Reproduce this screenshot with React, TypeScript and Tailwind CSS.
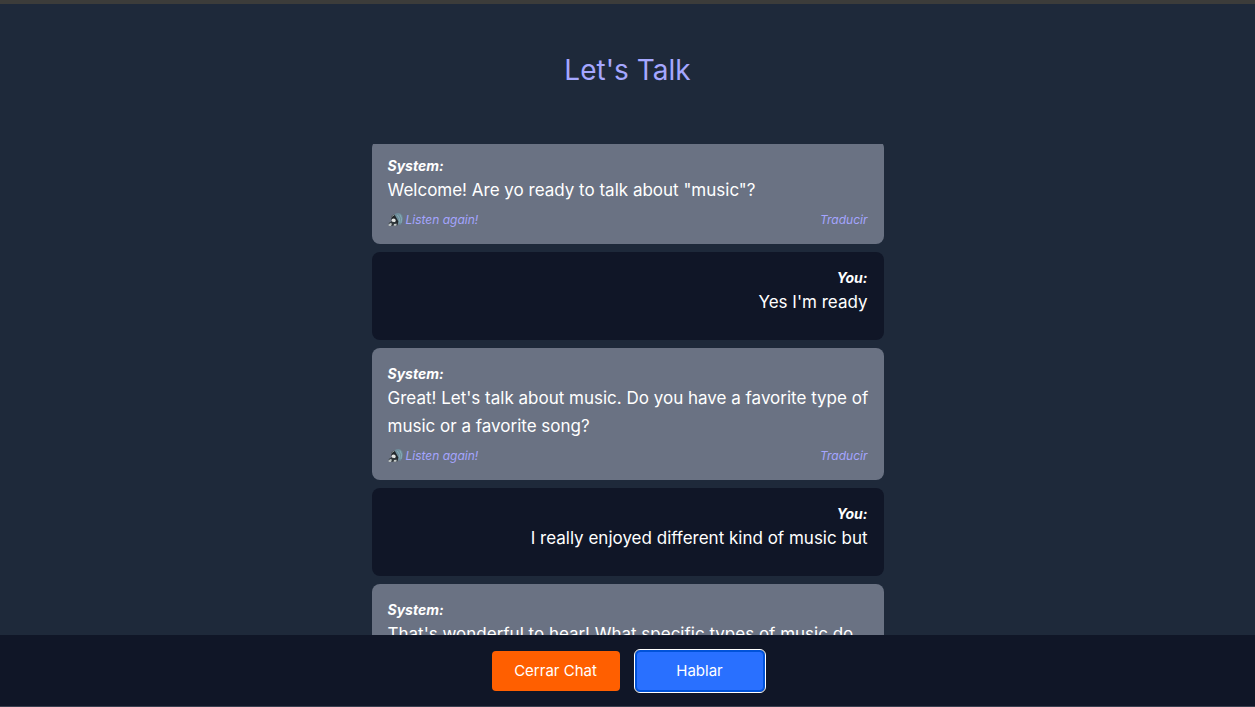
type Message = { from: 'system' | 'you'; text: string };

const messages: Message[] = [
  { from: 'system', text: 'Welcome! Are yo ready to talk about "music"?' },
  { from: 'you', text: "Yes I'm ready" },
  {
    from: 'system',
    text: "Great! Let's talk about music. Do you have a favorite type of music or a favorite song?",
  },
  { from: 'you', text: 'I really enjoyed different kind of music but' },
  { from: 'system', text: "That's wonderful to hear! What specific types of music do" },
];

function SpeakerIcon() {
  return (
    <svg viewBox="0 0 16 16" className="size-4" aria-hidden="true">
      <path d="M6.5 2.2Q11.6-.4 14 3.2 16 8 12.8 12.4L9.6 12.6Z" fill="#6f929f" opacity=".85" />
      <path d="M9.4 3q3.2 3.4 1.8 7.6M11.8 2.4q3 3.8 1.2 8.6" fill="none" stroke="#8ab3bf" strokeWidth=".8" />
      <path d="M3.4 4.4Q4.6 2 6.8 3L10.4 9.6 9.6 12.8 3.4 10.4Z" fill="#22282c" />
      <path d="M3.6 5.4Q4.6 2.6 6.2 3.4" fill="none" stroke="#a3adad" strokeWidth=".8" />
      <ellipse cx="5.6" cy="8.6" rx="2.1" ry="2" fill="#e2e5e3" />
      <path d="m.8 11 2.8-1.4 6 1.2-.4 3H.8Z" fill="#30373b" />
      <path d="m.6 12.2 2-1.2 1.4.8-1 2.2H.6Z" fill="#b9c0bf" />
      <path d="m6 12 2.6-.2-.2 2H5.6Z" fill="#c6cbca" />
    </svg>
  );
}

function Bubble({ message }: { message: Message }) {
  const system = message.from === 'system';
  return (
    <li className={system ? 'rounded-lg bg-[#6a7283] p-4' : 'rounded-lg bg-[#101627] p-4 pb-6 text-right'}>
      <p className="text-sm leading-5 font-bold italic">{system ? 'System:' : 'You:'}</p>
      <p className={system ? '-mr-2 text-[17px] leading-7' : 'text-[17px] leading-7'}>{message.text}</p>
      {system && (
        <div className="mt-2 flex justify-between text-xs leading-4 text-[#a5a5ff] italic">
          <button type="button" className="flex items-center gap-0.5 italic">
            <SpeakerIcon />
            Listen again!
          </button>
          <button type="button" className="italic">Traducir</button>
        </div>
      )}
    </li>
  );
}

export default function App() {
  return (
    <div className="flex h-screen flex-col overflow-hidden border-t-4 border-[#3c3c3a] bg-[#1e293a] font-['Inter',sans-serif] text-white">
      <header className="shrink-0 pt-12 pb-14 text-center">
        <h1 className="text-[28px] leading-9 text-[#a5a7ff]">Let's Talk</h1>
      </header>
      <main className="mx-auto min-h-0 w-full max-w-lg flex-1 overflow-y-auto [scrollbar-width:none]">
        <ul className="-mt-1 flex flex-col gap-2">
          {messages.map((message) => (
            <Bubble key={message.text} message={message} />
          ))}
        </ul>
      </main>
      <footer className="flex shrink-0 justify-center gap-4 bg-[#101627] py-4 shadow-[inset_0_-1px_0_#3b4050]">
        <button type="button" className="h-10 w-32 rounded bg-[#ff5f00] text-[15px]">Cerrar Chat</button>
        <button
          type="button"
          className="h-10 w-32 rounded border border-[#0052d9] bg-[#2970ff] text-[15px] outline-1 outline-offset-1 outline-white ring-1 ring-[#0052d9]"
        >
          Hablar
        </button>
      </footer>
    </div>
  );
}
